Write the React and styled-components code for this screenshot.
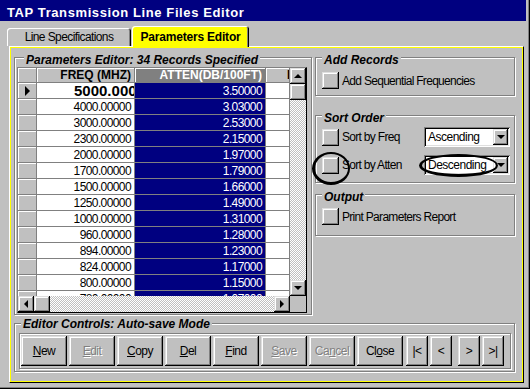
import React from 'react';
import styled, { createGlobalStyle, css } from 'styled-components';

const GlobalStyle = createGlobalStyle`
  html, body { margin: 0; padding: 0; background: #c0c0c0; }
  body { font-family: "Liberation Sans", Arial, sans-serif; font-size: 12px; color: #000; }
  *, *::before, *::after { box-sizing: border-box; }
`;

const raised = css`
  box-shadow: inset -1px -1px #000, inset 1px 1px #dfdfdf, inset -2px -2px #808080, inset 2px 2px #fff;
`;

const sunken = css`
  box-shadow: inset 1px 1px #808080, inset -1px -1px #fff, inset 2px 2px #000, inset -2px -2px #dfdfdf;
`;

const etched = css`
  border: 1px solid #808080;
  box-shadow: 1px 1px #fff, inset 1px 1px #fff;
`;

const checker = css`
  background: repeating-conic-gradient(#c0c0c0 0% 25%, #fff 0% 50%) 0 0 / 2px 2px;
`;

const Window = styled.div`
  width: 530px;
  height: 389px;
  padding-right: 4px;
  background: #c0c0c0;
  display: flex;
  flex-direction: column;
  overflow: hidden;
  box-shadow: inset -1px -1px #000, inset -2px -2px #808080;
`;

const TitleBar = styled.div`
  height: 21px;
  flex: none;
  padding: 4px 0 0 7px;
  background: #000080;
  color: #fff;
  font-size: 13px;
  font-weight: bold;
  letter-spacing: 0.6px;
  line-height: 17px;
  white-space: nowrap;
`;

const TabStrip = styled.div`
  height: 25px;
  flex: none;
  display: flex;
  align-items: flex-end;
  padding-left: 7px;
`;

const Tab = styled.div`
  position: relative;
  z-index: ${p => (p.$active ? 2 : 0)};
  width: ${p => p.$w}px;
  height: ${p => (p.$active ? 21 : 18)}px;
  margin-bottom: ${p => (p.$active ? -1 : 0)}px;
  margin-left: ${p => (p.$active ? 1 : 0)}px;
  display: flex;
  align-items: center;
  justify-content: center;
  background: ${p => (p.$active ? '#ffff00' : '#c0c0c0')};
  border-radius: 3px 3px 0 0;
  box-shadow: inset 1px 1px #fff, inset -1px 0 #000, inset -2px 0 #808080;
  font-weight: ${p => (p.$active ? 'bold' : 'normal')};
  letter-spacing: ${p => (p.$active ? '-0.2px' : '-0.6px')};
  white-space: nowrap;
`;

const Page = styled.div`
  height: 337px;
  flex: none;
  margin: 0 2px 0 9px;
  padding: 0 8px 0 4px;
  border: 1px solid;
  border-color: #fff #000 #000 #fff;
  box-shadow: inset 1px 1px #ffff00, inset -1px -1px #ffff00;
  display: flex;
  flex-direction: column;
`;

const TopArea = styled.div`
  display: flex;
  gap: 3px;
`;

const RightCol = styled.div`
  width: 200px;
  display: flex;
  flex-direction: column;
`;

const Group = styled.fieldset`
  margin: ${p => p.$mt || 0}px 0 0;
  min-width: 0;
  ${etched}
  padding: ${p => p.$pad};
  width: ${p => (p.$w ? `${p.$w}px` : 'auto')};
`;

const Legend = styled.legend`
  margin-left: ${p => p.$ml || 0}px;
  padding: ${p => (p.$pt ?? 6)}px 0 0;
  font-size: 12px;
  font-weight: bold;
  font-style: italic;
  line-height: 14px;
  white-space: nowrap;
`;

const LegendText = styled.span`
  display: inline-block;
  padding: 0 2px;
  background: #c0c0c0;
`;

const GridBox = styled.div`
  width: 290px;
  height: 246px;
  border: 1px solid;
  border-color: #808080 #000 #000 #808080;
  display: grid;
  grid-template-columns: 272px 16px;
  grid-template-rows: 228px 16px;
  background: #c0c0c0;
`;

const Table = styled.div`
  display: grid;
  grid-template-columns: 19px 98px 131px 24px;
  grid-template-rows: 15px;
  grid-auto-rows: 16px;
  overflow: hidden;
  background: #fff;
`;

const cellBase = css`
  display: flex;
  align-items: center;
  overflow: hidden;
  white-space: nowrap;
  border-right: 1px solid #808080;
  border-bottom: 1px solid #808080;
`;

const HeadCell = styled.div`
  ${cellBase}
  justify-content: ${p => (p.$left ? 'flex-start' : 'flex-end')};
  padding: ${p => (p.$left ? '0 0 0 21px' : '0 3px 0 0')};
  background: ${p => (p.$selected ? '#808080' : '#c0c0c0')};
  color: ${p => (p.$selected ? '#fff' : '#000')};
  box-shadow: inset 1px 1px #fff;
  font-weight: bold;
`;

const RowHead = styled.div`
  ${cellBase}
  justify-content: center;
  background: #c0c0c0;
  box-shadow: inset 1px 1px #fff;
`;

const DataCell = styled.div`
  ${cellBase}
  justify-content: ${p => (p.$lead ? 'flex-start' : 'flex-end')};
  padding: ${p => (p.$lead ? '0 0 0 37px' : '0 3px 0 0')};
  background: ${p => (p.$navy ? '#000080' : '#fff')};
  color: ${p => (p.$navy ? '#fff' : '#000')};
  font-size: ${p => (p.$lead ? 15 : 12)}px;
  font-weight: ${p => (p.$lead ? 'bold' : 'normal')};
  letter-spacing: ${p => (p.$lead ? '0' : '-0.6px')};
`;

const VScroll = styled.div`
  display: flex;
  flex-direction: column;
`;

const HScroll = styled.div`
  display: flex;
`;

const ScrollBtn = styled.div`
  width: ${p => p.$w || 16}px;
  height: 16px;
  flex: none;
  display: flex;
  align-items: center;
  justify-content: center;
  background: #c0c0c0;
  ${raised}
`;

const Track = styled.div`
  flex: 1;
  ${checker}
`;

const arrows = {
  up: 'border-width: 0 4px 4px; border-color: transparent transparent #000;',
  down: 'border-width: 4px 4px 0; border-color: #000 transparent transparent;',
  left: 'border-width: 4px 4px 4px 0; border-color: transparent #000 transparent transparent;',
  right: 'border-width: 4px 0 4px 4px; border-color: transparent transparent transparent #000;',
  pointer: 'border-width: 5px 0 5px 5px; border-color: transparent transparent transparent #000;',
};

const Arrow = styled.span`
  width: 0;
  height: 0;
  border-style: solid;
  ${p => arrows[p.$dir]}
`;

const Corner = styled.div`
  background: #c0c0c0;
`;

const OptionRow = styled.div`
  display: flex;
  align-items: center;
  height: ${p => p.$h || 17}px;
  gap: 3px;
  letter-spacing: -0.7px;
`;

const OptionList = styled.div`
  display: flex;
  flex-direction: column;
  gap: 8px;
`;

const Anchor = styled.div`
  position: relative;
  flex: none;
  display: flex;
  margin-left: ${p => (p.$push ? 'auto' : '0')};
`;

const CheckButton = styled.div`
  width: 17px;
  height: 17px;
  background: #c0c0c0;
  ${raised}
`;

const Select = styled.div`
  width: 86px;
  height: 20px;
  padding: 2px;
  display: flex;
  align-items: center;
  background: #fff;
  ${sunken}
`;

const SelectText = styled.span`
  flex: 1;
  padding-left: 2px;
  letter-spacing: -0.5px;
`;

const Ring = styled.span`
  position: absolute;
  left: ${p => p.$x}px;
  top: ${p => p.$y}px;
  width: ${p => p.$w}px;
  height: ${p => p.$h}px;
  border: 2px solid #000;
  border-left-width: 3px;
  border-bottom-width: 3px;
  border-radius: 50%;
  pointer-events: none;
`;

const ButtonFrame = styled.div`
  ${etched}
  padding: 2px 1px;
  display: flex;
  gap: 2px;
`;

const CmdButton = styled.button`
  width: ${p => p.$w}px;
  height: 30px;
  margin: 0 0 0 ${p => p.$ml || 0}px;
  padding: 0;
  flex: none;
  border: none;
  background: #c0c0c0;
  ${raised}
  font-family: inherit;
  font-size: 12px;
  letter-spacing: -0.5px;
  color: ${p => (p.$disabled ? '#808080' : '#000')};
  text-shadow: ${p => (p.$disabled ? '1px 1px #fff' : 'none')};
`;

const rows = [
  ['5000.00000', '3.50000'],
  ['4000.00000', '3.03000'],
  ['3000.00000', '2.53000'],
  ['2300.00000', '2.15000'],
  ['2000.00000', '1.97000'],
  ['1700.00000', '1.79000'],
  ['1500.00000', '1.66000'],
  ['1250.00000', '1.49000'],
  ['1000.00000', '1.31000'],
  ['960.00000', '1.28000'],
  ['894.00000', '1.23000'],
  ['824.00000', '1.17000'],
  ['800.00000', '1.15000'],
  ['780.00000', '1.07000'],
];

const commands = [
  { label: 'New', key: 0 },
  { label: 'Edit', key: 0, disabled: true },
  { label: 'Copy', key: 0 },
  { label: 'Del', key: 0 },
  { label: 'Find', key: 0 },
  { label: 'Save', key: 0, disabled: true },
  { label: 'Cancel', key: 2, disabled: true },
  { label: 'Close', key: 2 },
];

const Mnemonic = ({ label, at }) => (
  <>
    {label.slice(0, at)}
    <u>{label[at]}</u>
    {label.slice(at + 1)}
  </>
);

const SortSelect = ({ value }) => (
  <Select>
    <SelectText>{value}</SelectText>
    <ScrollBtn $w={15}>
      <Arrow $dir="down" />
    </ScrollBtn>
  </Select>
);

const ParamGrid = () => (
  <GridBox>
    <Table>
      <HeadCell />
      <HeadCell>FREQ (MHZ)</HeadCell>
      <HeadCell $selected>ATTEN(DB/100FT)</HeadCell>
      <HeadCell $left>ID</HeadCell>
      {rows.map(([freq, atten], i) => (
        <React.Fragment key={freq}>
          <RowHead>{i === 0 && <Arrow $dir="pointer" />}</RowHead>
          <DataCell $lead={i === 0}>{freq}</DataCell>
          <DataCell $navy>{atten}</DataCell>
          <DataCell />
        </React.Fragment>
      ))}
    </Table>
    <VScroll>
      <ScrollBtn><Arrow $dir="up" /></ScrollBtn>
      <ScrollBtn />
      <Track />
      <ScrollBtn><Arrow $dir="down" /></ScrollBtn>
    </VScroll>
    <HScroll>
      <ScrollBtn><Arrow $dir="left" /></ScrollBtn>
      <ScrollBtn />
      <Track />
      <ScrollBtn><Arrow $dir="right" /></ScrollBtn>
    </HScroll>
    <Corner />
  </GridBox>
);

export default function App() {
  return (
    <Window>
      <GlobalStyle />
      <TitleBar>TAP Transmission Line Files Editor</TitleBar>
      <TabStrip>
        <Tab $w={124}>Line Specifications</Tab>
        <Tab $w={117} $active>Parameters Editor</Tab>
      </TabStrip>
      <Page>
        <TopArea>
          <Group $w={298} $pad="0 4px 1px 2px">
            <Legend $ml={7}><LegendText>Parameters Editor: 34 Records Specified</LegendText></Legend>
            <ParamGrid />
          </Group>
          <RightCol>
            <Group $pad="5px 4px 6px 6px">
              <Legend><LegendText>Add Records</LegendText></Legend>
              <OptionRow>
                <CheckButton />
                Add Sequential Frequencies
              </OptionRow>
            </Group>
            <Group $mt={9} $pad="2px 4px 7px 6px">
              <Legend><LegendText>Sort Order</LegendText></Legend>
              <OptionList>
                <OptionRow $h={20}>
                  <Anchor><CheckButton /></Anchor>
                  Sort by Freq
                  <Anchor $push><SortSelect value="Ascending" /></Anchor>
                </OptionRow>
                <OptionRow $h={20}>
                  <Anchor>
                    <CheckButton />
                    <Ring $x={-10} $y={-5} $w={38} $h={33} />
                  </Anchor>
                  Sort by Atten
                  <Anchor $push>
                    <SortSelect value="Descending" />
                    <Ring $x={-5} $y={-1} $w={79} $h={23} />
                  </Anchor>
                </OptionRow>
              </OptionList>
            </Group>
            <Group $mt={1} $pad="4px 4px 10px 6px">
              <Legend><LegendText>Output</LegendText></Legend>
              <OptionRow>
                <CheckButton />
                Print Parameters Report
              </OptionRow>
            </Group>
          </RightCol>
        </TopArea>
        <Group $pad="2px 3px 2px 4px">
          <Legend $pt={2} $ml={2}><LegendText>Editor Controls: Auto-save Mode</LegendText></Legend>
          <ButtonFrame>
            {commands.map(c => (
              <CmdButton key={c.label} $w={46} $disabled={c.disabled}>
                <Mnemonic label={c.label} at={c.key} />
              </CmdButton>
            ))}
            <CmdButton $w={22} $ml={1}>|&lt;</CmdButton>
            <CmdButton $w={22}>&lt;</CmdButton>
            <CmdButton $w={22} $ml={4}>&gt;</CmdButton>
            <CmdButton $w={22}>&gt;|</CmdButton>
          </ButtonFrame>
        </Group>
      </Page>
    </Window>
  );
}
